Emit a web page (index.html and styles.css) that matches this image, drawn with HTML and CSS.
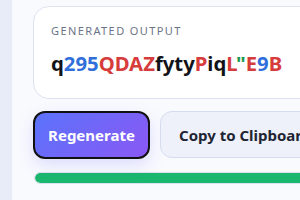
FILE: index.html
```html
<!DOCTYPE html>
<html lang="en">
<head>
    <meta charset="UTF-8">
    <meta name="viewport" content="width=device-width, initial-scale=1.0">
    <title>Password Generator</title>
    <link rel="stylesheet" href="styles.css">
</head>
<body>
    <div class="sidebar"></div>
    <div class="main">
        <div class="output-card">
            <div class="output-label">Generated Output</div>
            <div class="output-value"><span class="lower">q</span><span class="digit">295</span><span class="upper">QDAZ</span><span class="lower">fyty</span><span class="upper">P</span><span class="lower">iq</span><span class="upper">L</span><span class="symbol">"</span><span class="upper">E</span><span class="digit">9</span><span class="upper">B</span></div>
        </div>

        <div class="actions">
            <button class="btn-primary">Regenerate</button>
            <button class="btn-secondary">Copy to Clipboard</button>
        </div>

        <div class="strength-track">
            <div class="strength-bar" style="width: 100%"></div>
        </div>
    </div>
</body>
</html>
```

FILE: styles.css
```css
body {
    margin: 0;
    display: flex;
    font-family: "Noto Sans", "Open Sans", sans-serif;
    background-color: #f9fafe;
    overflow: hidden;
    height: 200px;
}
.sidebar {
    width: 12px;
    flex-shrink: 0;
    background-color: #e8ebf8;
}
.main {
    padding: 6px 0 0 21px;
    width: 440px;
    flex-shrink: 0;
}
.output-card {
    background-color: white;
    border: 1px solid #dde2f1;
    border-radius: 16px;
    padding: 16px 17px 21px;
}
.output-label {
    font-size: 11px;
    letter-spacing: 1.4px;
    text-transform: uppercase;
    color: #6b7487;
    line-height: 16px;
}
.output-value {
    margin-top: 10px;
    font-size: 20.3px;
    font-weight: 700;
    line-height: 28px;
    color: #111318;
}
.digit { color: #2f6edb; }
.upper { color: #d63c3c; }
.lower { color: #111318; }
.symbol { color: #1d9a50; }
.actions {
    display: flex;
    gap: 10px;
    margin-top: 12px;
}
button {
    font-family: inherit;
    font-size: 15px;
    font-weight: 700;
    border-radius: 12px;
    cursor: pointer;
    height: 48px;
    white-space: nowrap;
}
.btn-primary {
    width: 117px;
    color: white;
    border: 2px solid #111;
    background: linear-gradient(135deg, #5b73fb, #8a58f4);
    box-shadow: 0 6px 16px rgba(110, 110, 240, 0.2);
}
.btn-secondary {
    padding: 0 18px;
    height: 47px;
    color: #1f2533;
    background-color: #eef1fa;
    border: 1px solid #d6dcef;
}
.strength-track {
    margin-top: 13px;
    margin-left: 1px;
    height: 10px;
    border-radius: 6px;
    border: 1px solid #dce1f0;
    background-color: #eef1fa;
    overflow: hidden;
}
.strength-bar {
    height: 100%;
    background-color: #1bb76e;
    border-radius: 6px;
}
```
